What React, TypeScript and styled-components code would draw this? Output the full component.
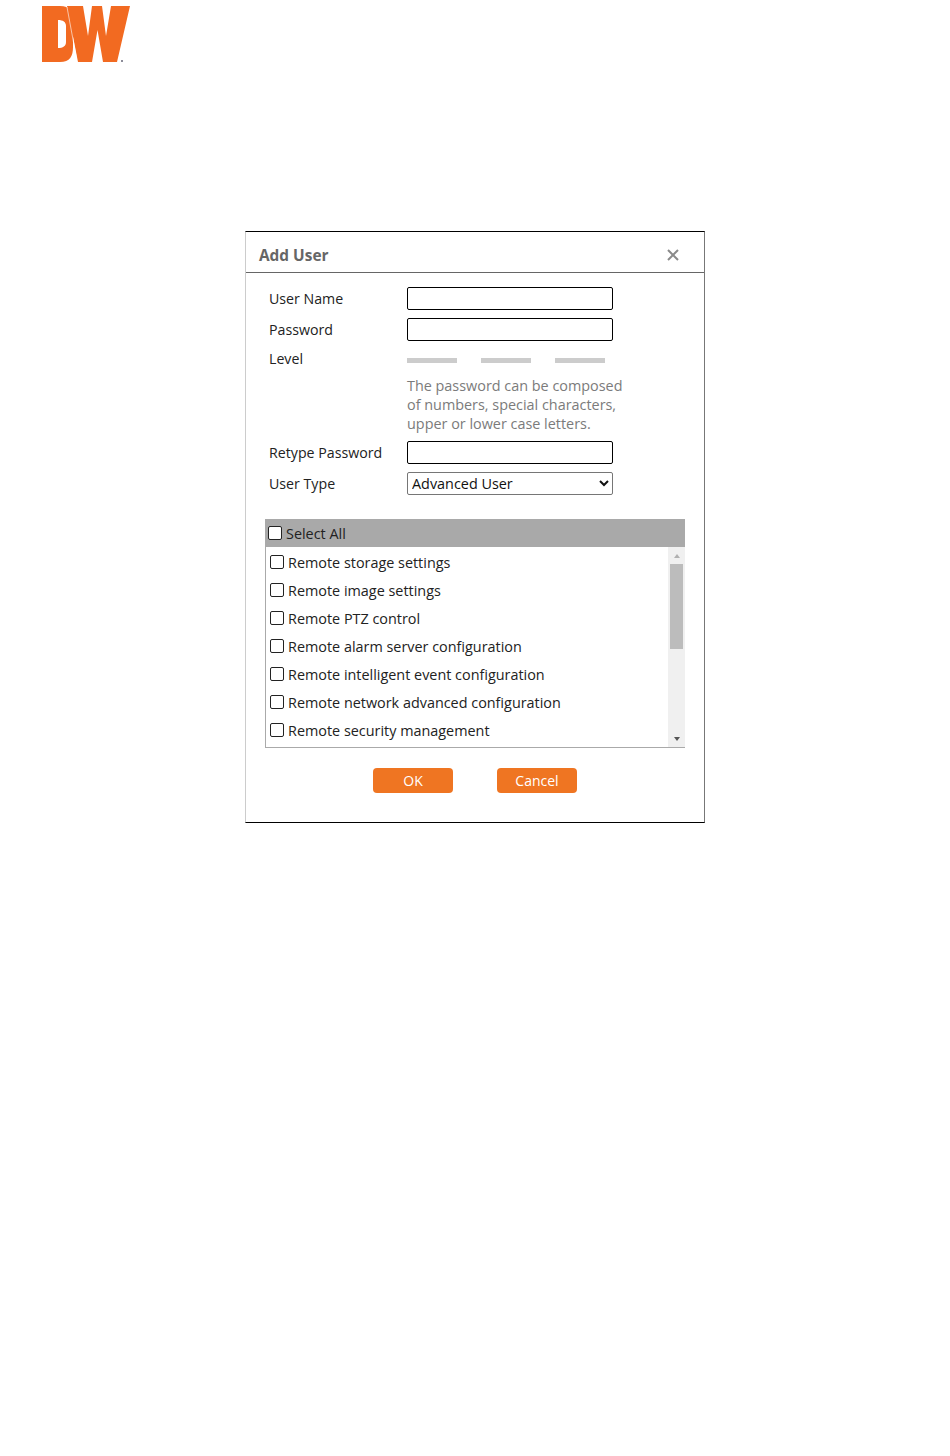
import React from 'react'
import styled, { createGlobalStyle } from 'styled-components'

const GlobalStyle = createGlobalStyle`
    html, body {
        margin: 0;
        background: #fff;
    }
    body {
        font-family: "Open Sans", "Noto Sans", "Liberation Sans", sans-serif;
        font-size: 14.4px;
        color: #222;
    }
`

const Page = styled.div`
    min-height: 1456px;
    display: flex;
    flex-direction: column;
`

const LogoBar = styled.div`
    height: 231px;
    padding: 6px 0 0 42px;
    box-sizing: border-box;
`

const DialogWrap = styled.div`
    display: flex;
    justify-content: center;
`

const Dialog = styled.div`
    width: 460px;
    height: 592px;
    box-sizing: border-box;
    border: 1px solid #000;
    border-left-color: #ccc;
    border-right-color: #777;
    display: flex;
    flex-direction: column;
`

const DialogHead = styled.div`
    height: 41px;
    box-sizing: border-box;
    border-bottom: 1px solid #666;
    padding: 0 25px 0 13px;
    display: flex;
    align-items: center;
    justify-content: space-between;
`

const Title = styled.h2`
    margin: 6px 0 0;
    font-size: 15.4px;
    font-weight: 700;
    color: #666;
`

const CloseButton = styled.button`
    border: 0;
    padding: 0;
    background: none;
    width: 12px;
    height: 12px;
    display: flex;
    margin-top: 5px;
`

const Form = styled.div`
    padding: 14px 19px 0 23px;
    display: flex;
    flex-direction: column;
    gap: 8px;
`

const Row = styled.div`
    display: flex;
    align-items: center;
    height: 23px;
`

const Label = styled.label`
    width: 138px;
    flex: none;
    font-size: 14.2px;
`

const TextInput = styled.input`
    width: 206px;
    height: 23px;
    box-sizing: border-box;
    border: 1px solid #000;
    border-radius: 2px;
    padding: 0 4px;
    font: inherit;
`

const TypeSelect = styled.select`
    width: 206px;
    height: 23px;
    box-sizing: border-box;
    border: 1px solid #767676;
    border-radius: 2px;
    background: #fff;
    font: inherit;
    color: #111;
`

const LevelRow = styled.div`
    display: flex;
    align-items: center;
    height: 19px;
`

const LevelBars = styled.div`
    display: flex;
    gap: 24px;
    margin-top: 3px;
`

const LevelBar = styled.span`
    width: 50px;
    height: 5px;
    background: #ccc;
`

const Hint = styled.p`
    margin: 0 0 0 138px;
    width: 228px;
    line-height: 19px;
    color: #7b7b7b;
`

const Rights = styled.div`
    margin: 24px 0 0 19px;
    width: 420px;
`

const RightsHead = styled.label`
    height: 28px;
    background: #a9a9a9;
    display: flex;
    align-items: center;
    gap: 4px;
    padding-left: 3px;
`

const Box = styled.input.attrs({ type: 'checkbox' })`
    appearance: none;
    width: 14px;
    height: 14px;
    box-sizing: border-box;
    margin: 0;
    flex: none;
    border: 1px solid #222;
    border-radius: 2px;
    background: #fff;

    &:checked {
        background: #f07522;
    }
`

const RightsBody = styled.div`
    display: flex;
    border-left: 1px solid #aaa;
    border-bottom: 1px solid #aaa;
`

const RightsList = styled.div`
    flex: 1;
    height: 200px;
    overflow: hidden;
`

const RightRow = styled.label`
    height: 28px;
    display: flex;
    align-items: center;
    gap: 4px;
    padding-left: 4px;

    &:first-child {
        margin-top: 1px;
    }
`

const ScrollBar = styled.div`
    width: 17px;
    height: 200px;
    background: #f0f0f0;
    display: flex;
    flex-direction: column;
`

const ScrollArrow = styled.div<{ $down?: boolean }>`
    height: 17px;
    display: flex;
    align-items: center;
    justify-content: center;

    &::before {
        content: '';
        border-left: 3.5px solid transparent;
        border-right: 3.5px solid transparent;
        border-bottom: ${p => (p.$down ? '0' : '4px solid #b0b0b0')};
        border-top: ${p => (p.$down ? '4px solid #555' : '0')};
    }
`

const ScrollThumb = styled.div`
    height: 85px;
    margin: 0 2px;
    background: #bcbcbc;
`

const ScrollRest = styled.div`
    flex: 1;
`

const Actions = styled.div`
    margin-top: 20px;
    display: flex;
    justify-content: center;
    gap: 44px;
`

const ActionButton = styled.button`
    width: 80px;
    height: 25px;
    border: 0;
    border-radius: 4px;
    background: #ef7522;
    color: #fff;
    font-family: inherit;
    font-size: 14px;
    padding: 0;
`

const rights = [
    'Remote storage settings',
    'Remote image settings',
    'Remote PTZ control',
    'Remote alarm server configuration',
    'Remote intelligent event configuration',
    'Remote network advanced configuration',
    'Remote security management',
]

const App: React.FC = () => {
    return (
        <Page>
            <GlobalStyle />
            <LogoBar>
                <svg width="88" height="56" viewBox="0 0 88 56">
                    <path
                        fill="#f26a21"
                        fillRule="evenodd"
                        d="M0 0H18C28 0 31 6 31 15V41C31 50 28 56 18 56H0ZM16 14V42C21 42 24 40 24 36V20C24 16 21 14 16 14Z"
                    />
                    <path
                        fill="#f26a21"
                        d="M25 0H41L46 30L50 0H60L64 30L69 0H88L75 56H61L55.500 24L50 56H36Z"
                    />
                    <path d="M25 1L34 50" stroke="#fff" strokeOpacity=".6" fill="none" />
                    <circle cx="80" cy="55" r="1" fill="#667" />
                </svg>
            </LogoBar>
            <DialogWrap>
                <Dialog>
                    <DialogHead>
                        <Title>Add User</Title>
                        <CloseButton aria-label="Close">
                            <svg width="12" height="12" viewBox="0 0 12 12">
                                <path d="M1 1l10 10M11 1L1 11" stroke="#8a8a8a" strokeWidth="2" fill="none" />
                            </svg>
                        </CloseButton>
                    </DialogHead>
                    <Form>
                        <Row>
                            <Label>User Name</Label>
                            <TextInput type="text" />
                        </Row>
                        <Row>
                            <Label>Password</Label>
                            <TextInput type="password" />
                        </Row>
                        <LevelRow>
                            <Label>Level</Label>
                            <LevelBars>
                                <LevelBar />
                                <LevelBar />
                                <LevelBar />
                            </LevelBars>
                        </LevelRow>
                        <Hint>The password can be composed of numbers, special characters, upper or lower case letters.</Hint>
                        <Row>
                            <Label>Retype Password</Label>
                            <TextInput type="password" />
                        </Row>
                        <Row>
                            <Label>User Type</Label>
                            <TypeSelect defaultValue="Advanced User">
                                <option>Advanced User</option>
                                <option>Normal User</option>
                            </TypeSelect>
                        </Row>
                    </Form>
                    <Rights>
                        <RightsHead>
                            <Box />
                            Select All
                        </RightsHead>
                        <RightsBody>
                            <RightsList>
                                {rights.map((item, index) => {
                                    return (
                                        <RightRow key={index}>
                                            <Box />
                                            {item}
                                        </RightRow>
                                    )
                                })}
                            </RightsList>
                            <ScrollBar>
                                <ScrollArrow />
                                <ScrollThumb />
                                <ScrollRest />
                                <ScrollArrow $down />
                            </ScrollBar>
                        </RightsBody>
                    </Rights>
                    <Actions>
                        <ActionButton>OK</ActionButton>
                        <ActionButton>Cancel</ActionButton>
                    </Actions>
                </Dialog>
            </DialogWrap>
        </Page>
    )
}
export default App
